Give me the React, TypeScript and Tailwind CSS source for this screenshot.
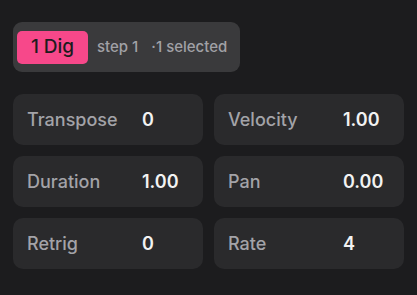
const params = [
  { label: "Transpose", value: "0" },
  { label: "Velocity", value: "1.00" },
  { label: "Duration", value: "1.00" },
  { label: "Pan", value: "0.00" },
  { label: "Retrig", value: "0" },
  { label: "Rate", value: "4" },
];

export default function App() {
  return (
    <div
      className="min-h-screen w-full bg-[#1c1c1e] pl-[13px] pt-[22px]"
      style={{ fontFamily: "Inter, 'Noto Sans', sans-serif" }}
    >
      {/* Selection header */}
      <div className="flex h-[50px] w-[227px] items-center rounded-[9px] bg-[#3a3a3c] px-1">
        <div className="flex h-[33px] w-[71px] items-center justify-center rounded-[5px] bg-[#f7488a] text-[19px] font-medium text-[#1c1c1e]">
          1 Dig
        </div>
        <span className="ml-[9px] text-[15px] font-medium text-[#a1a1a6]">step 1</span>
        <span className="ml-[13px] text-[15px] font-medium text-[#a1a1a6]">·1 selected</span>
      </div>

      {/* Parameters */}
      <div className="mt-[22px] grid w-[391px] grid-cols-2 gap-[11px]">
        {params.map((p) => (
          <div
            key={p.label}
            className="flex h-[51px] items-center rounded-[10px] bg-[#2a2a2c] pl-[14px]"
          >
            <span className="w-[115px] text-[18px] font-medium text-[#a3a3a8]">{p.label}</span>
            <span className="text-[18px] font-semibold text-[#f2f2f2]">{p.value}</span>
          </div>
        ))}
      </div>
    </div>
  );
}
